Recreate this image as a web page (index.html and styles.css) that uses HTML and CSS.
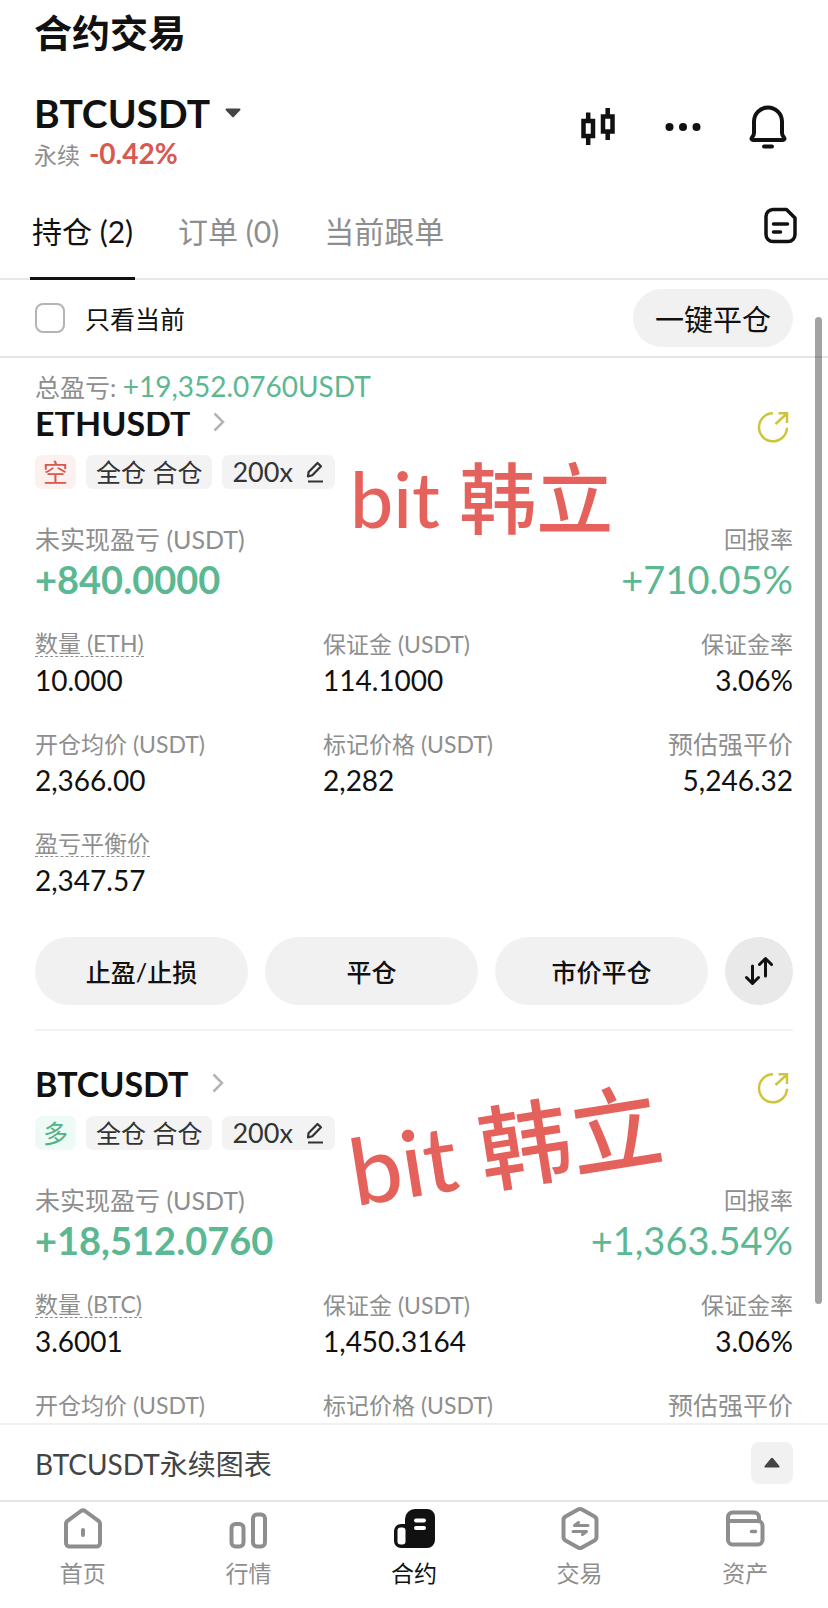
FILE: index.html
```html
<!DOCTYPE html>
<html lang="zh-CN">
<head>
    <meta charset="UTF-8">
    <meta name="viewport" content="width=device-width, initial-scale=1.0">
    <title>合约交易</title>
    <link rel="stylesheet" href="styles.css">
</head>
<body>

    <div class="app">
        <h1 class="page-title">合约交易</h1>

        <header class="pair">
            <div>
                <button type="button" class="pair-name">BTCUSDT
                    <svg width="16" height="10" viewBox="0 0 16 10"><path d="M1.500 0.500h13a1 1 0 0 1 .7 1.700L9 8.800a1.400 1.400 0 0 1-2 0L.8 2.200A1 1 0 0 1 1.500 0.500z" fill="#444"/></svg>
                </button>
                <div class="pair-sub">永续 <span class="down">-0.42%</span></div>
            </div>
            <div class="pair-icons">
                <button type="button" class="icon-btn" aria-label="K线">
                    <svg width="36" height="38" viewBox="0 0 36 38" fill="none" stroke="#111" stroke-width="4.500">
                        <rect x="3.500" y="13" width="9.500" height="15"/>
                        <path d="M8.200 4.500v8M8.200 29v8"/>
                        <rect x="23" y="8.500" width="9.500" height="15"/>
                        <path d="M27.700 0v8M27.700 24v8"/>
                    </svg>
                </button>
                <button type="button" class="icon-btn" aria-label="更多">
                    <svg width="36" height="10" viewBox="0 0 36 10" fill="#111"><circle cx="4.500" cy="5" r="4"/><circle cx="18" cy="5" r="4"/><circle cx="31.500" cy="5" r="4"/></svg>
                </button>
                <button type="button" class="icon-btn" aria-label="提醒">
                    <svg width="40" height="44" viewBox="0 0 40 44" fill="none" stroke="#111" stroke-width="4" stroke-linecap="round" stroke-linejoin="round">
                        <path d="M6 16.500a14 14 0 0 1 28 0V28c0 2 .8 3.200 2 4.500.9 1.100.5 2.500-1 2.500H5c-1.500 0-1.900-1.400-1-2.500C5.200 31.200 6 30 6 28z"/>
                        <path d="M16 41.500h8"/>
                    </svg>
                </button>
            </div>
        </header>

        <nav class="tabs">
            <a href="#" class="tab active">持仓 (2)</a>
            <a href="#" class="tab">订单 (0)</a>
            <a href="#" class="tab">当前跟单</a>
            <button type="button" class="icon-btn tabs-doc" aria-label="历史记录">
                <svg width="34" height="37" viewBox="0 0 34 37" fill="none" stroke="#111" stroke-width="3.500" stroke-linecap="round" stroke-linejoin="round">
                    <path d="M9 2.500h13.500L31 11v16.500a7 7 0 0 1-7 7H9a7 7 0 0 1-7-7v-18a7 7 0 0 1 7-7z"/>
                    <path d="M9.500 17h14M9.500 25h7"/>
                </svg>
            </button>
        </nav>

        <div class="filter">
            <input type="checkbox" id="onlyCurrent" class="check">
            <label for="onlyCurrent">只看当前</label>
            <button type="button" class="close-all">一键平仓</button>
        </div>

        <div class="summary">总盈亏: <span class="summary-num">+19,352.0760USDT</span></div>

        <main class="list">
            <section class="card">
                <div class="card-head">
                    <h2>ETHUSDT</h2>
                    <svg class="chevron" width="12" height="20" viewBox="0 0 12 20"><path d="M1.500 1.500L10 10l-8.500 8.500" fill="none" stroke="#b4b4b4" stroke-width="2.500"/></svg>
                    <button type="button" class="share" aria-label="分享">
                        <svg width="32" height="31" viewBox="0 0 32 31" fill="none" stroke="#cfc53c" stroke-width="2.500"><path d="M16 1.300a14 14 0 1 0 14 14.500M18.500 12L30 1.500M21.500 1.300H30V11"/></svg>
                    </button>
                </div>
                <div class="tags">
                    <span class="tag tag-side tag-short">空</span>
                    <span class="tag">全仓 合仓</span>
                    <button type="button" class="tag tag-edit">200x
                        <svg width="20" height="22" viewBox="0 0 20 22" fill="none" stroke="#333" stroke-width="2.200" stroke-linejoin="round"><path d="M3 15.500l.6-4.500L12.500 2l3.500 3.300-8.700 9zM3 20.500h15"/></svg>
                    </button>
                </div>
                <div class="pnl">
                    <div>
                        <div class="pnl-label">未实现盈亏 (USDT)</div>
                        <div class="pnl-value strong">+840.0000</div>
                    </div>
                    <div class="right">
                        <div class="pnl-label small">回报率</div>
                        <div class="pnl-value">+710.05%</div>
                    </div>
                </div>
                <dl class="stats">
                    <div><dt><span class="hint">数量 (ETH)</span></dt><dd>10.000</dd></div>
                    <div><dt>保证金 (USDT)</dt><dd>114.1000</dd></div>
                    <div class="right"><dt>保证金率</dt><dd>3.06%</dd></div>
                    <div><dt>开仓均价 (USDT)</dt><dd>2,366.00</dd></div>
                    <div><dt>标记价格 (USDT)</dt><dd>2,282</dd></div>
                    <div class="right"><dt class="large">预估强平价</dt><dd>5,246.32</dd></div>
                    <div><dt><span class="hint">盈亏平衡价</span></dt><dd>2,347.57</dd></div>
                </dl>
                <div class="actions">
                    <button type="button">止盈/止损</button>
                    <button type="button">平仓</button>
                    <button type="button">市价平仓</button>
                    <button type="button" class="swap" aria-label="反手">
                        <svg width="30" height="30" viewBox="0 0 30 30" fill="none" stroke="#111" stroke-width="3" stroke-linecap="round" stroke-linejoin="round"><path d="M8.500 10v17M2.500 21.500l6 6 6-6M21.500 20V2.500M15.500 8.500l6-6 6 6"/></svg>
                    </button>
                </div>
                <div class="mark">bit 韩立</div>
            </section>

            <section class="card">
                <div class="card-head">
                    <h2>BTCUSDT</h2>
                    <svg class="chevron" width="12" height="20" viewBox="0 0 12 20"><path d="M1.500 1.500L10 10l-8.500 8.500" fill="none" stroke="#b4b4b4" stroke-width="2.500"/></svg>
                    <button type="button" class="share" aria-label="分享">
                        <svg width="32" height="31" viewBox="0 0 32 31" fill="none" stroke="#cfc53c" stroke-width="2.500"><path d="M16 1.300a14 14 0 1 0 14 14.500M18.500 12L30 1.500M21.500 1.300H30V11"/></svg>
                    </button>
                </div>
                <div class="tags">
                    <span class="tag tag-side tag-long">多</span>
                    <span class="tag">全仓 合仓</span>
                    <button type="button" class="tag tag-edit">200x
                        <svg width="20" height="22" viewBox="0 0 20 22" fill="none" stroke="#333" stroke-width="2.200" stroke-linejoin="round"><path d="M3 15.500l.6-4.500L12.500 2l3.500 3.300-8.700 9zM3 20.500h15"/></svg>
                    </button>
                </div>
                <div class="pnl">
                    <div>
                        <div class="pnl-label">未实现盈亏 (USDT)</div>
                        <div class="pnl-value strong">+18,512.0760</div>
                    </div>
                    <div class="right">
                        <div class="pnl-label small">回报率</div>
                        <div class="pnl-value">+1,363.54%</div>
                    </div>
                </div>
                <dl class="stats">
                    <div><dt><span class="hint">数量 (BTC)</span></dt><dd>3.6001</dd></div>
                    <div><dt>保证金 (USDT)</dt><dd>1,450.3164</dd></div>
                    <div class="right"><dt>保证金率</dt><dd>3.06%</dd></div>
                    <div><dt>开仓均价 (USDT)</dt></div>
                    <div><dt>标记价格 (USDT)</dt></div>
                    <div class="right"><dt class="large">预估强平价</dt></div>
                </dl>
                <div class="mark mark-tilt">bit 韩立</div>
            </section>
        </main>

        <div class="chart-bar">
            <span>BTCUSDT永续图表</span>
            <button type="button" class="expand" aria-label="展开图表">
                <svg width="16" height="11" viewBox="0 0 16 11"><path d="M1.500 10.500h13a1 1 0 0 0 .7-1.700L9 1.200a1.400 1.400 0 0 0-2 0L.8 8.800a1 1 0 0 0 .7 1.700z" fill="#444"/></svg>
            </button>
        </div>

        <nav class="bottom-nav">
            <a href="#">
                <svg width="44" height="44" viewBox="0 0 44 44" fill="none" stroke="#8e8e8e" stroke-width="4" stroke-linejoin="round" stroke-linecap="round"><path d="M5 16.500a3 3 0 0 1 1.200-2.300L20 4a3.500 3.500 0 0 1 4 0l13.800 10.200a3 3 0 0 1 1.200 2.300V36a3.500 3.500 0 0 1-3.500 3.500h-27A3.500 3.500 0 0 1 5 36zM22 23v5"/></svg>
                首页
            </a>
            <a href="#">
                <svg width="44" height="44" viewBox="0 0 44 44" fill="none" stroke="#8e8e8e" stroke-width="4"><rect x="5.500" y="17" width="12" height="22.500" rx="4"/><rect x="27" y="7.500" width="12" height="32" rx="4"/></svg>
                行情
            </a>
            <a href="#" class="active">
                <svg width="44" height="44" viewBox="0 0 44 44"><path d="M13 12a10 10 0 0 1 10-10h12a8 8 0 0 1 8 8v23a8 8 0 0 1-8 8H9a7 7 0 0 1-7-7V24a7 7 0 0 1 7-7h4z" fill="#111"/><rect x="5.500" y="20.500" width="8" height="17" rx="3" fill="#fff"/><path d="M24 13.500h8M24 21h8" stroke="#fff" stroke-width="4" stroke-linecap="round"/></svg>
                合约
            </a>
            <a href="#">
                <svg width="44" height="44" viewBox="0 0 44 44" fill="none" stroke="#8e8e8e" stroke-width="4" stroke-linejoin="round"><path d="M20 2.600a4 4 0 0 1 4 0l12.500 6.900a4 4 0 0 1 2 3.500v17a4 4 0 0 1-2 3.500L24 40.400a4 4 0 0 1-4 0L7.500 33.500a4 4 0 0 1-2-3.500V13a4 4 0 0 1 2-3.500z"/><path d="M30 18.500H16.500l4-3M15 24.500h13.500l-4 3" stroke-width="3" stroke-linecap="round"/></svg>
                交易
            </a>
            <a href="#">
                <svg width="44" height="44" viewBox="0 0 44 44" fill="none" stroke="#8e8e8e" stroke-width="4" stroke-linejoin="round" stroke-linecap="round"><path d="M5 14v-4a4.500 4.500 0 0 1 4.500-4.500H31a5 5 0 0 1 5 5v3.500M5 14h30a4.500 4.500 0 0 1 4.500 4.500V33a4.500 4.500 0 0 1-4.500 4.500H9.500A4.500 4.500 0 0 1 5 33z"/><path d="M28.500 24.500h4" stroke-width="3.500"/></svg>
                资产
            </a>
        </nav>

        <div class="scrollbar"></div>
    </div>

</body>
</html>
```

FILE: styles.css
```css
* {
    box-sizing: border-box;
}

body {
    margin: 0;
    background-color: #fff;
    color: #111;
    font-family: Lato, "Noto Sans CJK SC", sans-serif;
}

button {
    border: none;
    padding: 0;
    background: none;
    color: inherit;
    font-family: inherit;
    cursor: pointer;
}

a {
    color: inherit;
    text-decoration: none;
}

svg {
    display: block;
    overflow: visible;
}

.app {
    position: relative;
    display: flex;
    flex-direction: column;
    height: 100vh;
}

.page-title {
    margin: 0;
    padding: 0 34px;
    font-size: 38px;
    font-weight: 700;
    line-height: 64px;
}

/* Pair header */
.pair {
    display: flex;
    justify-content: space-between;
    padding: 27px 38px 0 34px;
}

.pair-name {
    display: flex;
    align-items: center;
    gap: 15px;
    font-size: 39px;
    font-weight: 700;
    line-height: 44px;
}

.pair-sub {
    color: #8e8e8e;
    font-size: 23px;
    line-height: 36px;
}

.down {
    margin-left: 3px;
    color: #d9584f;
    font-size: 28px;
    font-weight: 700;
}

.pair-icons {
    display: flex;
    gap: 41px;
    height: 72px;
}

.icon-btn {
    display: flex;
    align-items: center;
    justify-content: center;
    width: 44px;
}

/* Tabs */
.tabs {
    display: flex;
    gap: 41px;
    padding: 38px 30px 0;
    border-bottom: 2px solid #e8e8e8;
}

.tab {
    margin-bottom: -2px;
    padding: 0 2px 26px;
    border-bottom: 3px solid transparent;
    color: #8e8e8e;
    font-size: 30px;
    line-height: 40px;
}

.tab.active {
    border-bottom-color: #111;
    color: #111;
}

.tabs-doc {
    width: 34px;
    height: 28px;
    margin-left: auto;
}

/* Filter row */
.filter {
    display: flex;
    align-items: center;
    gap: 20px;
    height: 78px;
    padding: 0 35px;
    border-bottom: 2px solid #e5e5e5;
    font-size: 25px;
}

.check {
    appearance: none;
    width: 30px;
    height: 30px;
    margin: 0;
    border: 2px solid #b4b4b4;
    border-radius: 8px;
}

.check:checked {
    background-color: #111;
}

.close-all {
    height: 58px;
    margin-left: auto;
    padding: 0 22px;
    border-radius: 29px;
    background-color: #f1f1f1;
    font-size: 29px;
}

.summary {
    padding: 8px 35px 5px;
    color: #8e8e8e;
    font-size: 25px;
    line-height: 40px;
}

.summary-num {
    color: #5bb892;
    font-size: 28px;
}

/* Position list */
.list {
    flex: 1;
    min-height: 0;
    overflow: hidden;
    padding: 0 35px;
}

.card {
    position: relative;
}

.card + .card {
    margin-top: 24px;
    padding-top: 42px;
    border-top: 2px solid #f3f3f3;
}

.card-head {
    display: flex;
    align-items: flex-start;
    gap: 23px;
}

.card-head h2 {
    margin: 0;
    font-size: 34px;
    font-weight: 700;
    line-height: 22px;
}

.share {
    margin-left: auto;
    padding-right: 4px;
}

.tags {
    display: flex;
    gap: 10px;
    margin-top: 12px;
}

.tag {
    height: 34px;
    padding: 0 10px;
    border-radius: 7px;
    background-color: #f3f3f3;
    color: #333;
    font-size: 25px;
    line-height: 34px;
}

.tag-side {
    padding: 0 8px;
}

.tag-short {
    background-color: #fdf1f0;
    color: #d9584f;
}

.tag-long {
    background-color: #eefaf5;
    color: #4fb38a;
}

.tag-edit {
    display: flex;
    align-items: center;
    gap: 12px;
    font-size: 27px;
}

.pnl {
    display: flex;
    justify-content: space-between;
    margin-top: 34px;
}

.pnl-label {
    color: #8e8e8e;
    font-size: 25px;
    line-height: 32px;
}

.pnl-label.small {
    font-size: 23px;
}

.pnl-value {
    margin-top: 2px;
    color: #5bb892;
    font-size: 38px;
    line-height: 44px;
}

.pnl-value.strong {
    font-weight: 700;
}

.right {
    text-align: right;
}

.stats {
    display: grid;
    grid-template-columns: 38% 38% 24%;
    row-gap: 31px;
    margin: 28px 0 0;
}

.stats dt {
    color: #8e8e8e;
    font-size: 23px;
    line-height: 30px;
}

.stats dt.large {
    font-size: 25px;
}

.stats dd {
    margin: 3px 0 0;
    font-size: 28px;
    line-height: 36px;
}

.hint {
    display: inline-block;
    height: 28px;
    border-bottom: 1px dashed #8e8e8e;
    line-height: 28px;
    vertical-align: top;
}

.actions {
    display: flex;
    gap: 17px;
    margin-top: 39px;
}

.actions button {
    flex: 1;
    height: 68px;
    border-radius: 34px;
    background-color: #f1f1f1;
    font-size: 25px;
    font-weight: 500;
}

.actions .swap {
    display: flex;
    flex: none;
    align-items: center;
    justify-content: center;
    width: 68px;
    background-color: #e9e9e9;
}

/* Name stamped over the card */
.mark {
    position: absolute;
    top: 36px;
    left: 315px;
    color: #e5625c;
    font-size: 77px;
    font-weight: 500;
    line-height: 100px;
    white-space: nowrap;
    pointer-events: none;
}

.mark-tilt {
    top: 66px;
    left: 313px;
    font-size: 92px;
    transform: rotate(-9deg);
}

/* Chart drawer */
.chart-bar {
    display: flex;
    align-items: center;
    justify-content: space-between;
    height: 77px;
    padding: 0 35px;
    border-top: 2px solid #f0f0f0;
    color: #444;
    font-size: 28px;
}

.expand {
    display: flex;
    align-items: center;
    justify-content: center;
    width: 42px;
    height: 42px;
    border-radius: 8px;
    background-color: #f1f1f1;
}

.bottom-nav {
    display: flex;
    height: 108px;
    padding-top: 5px;
    border-top: 2px solid #e5e5e5;
}

.bottom-nav a {
    display: flex;
    flex: 1;
    flex-direction: column;
    align-items: center;
    gap: 6px;
    color: #8e8e8e;
    font-size: 23px;
    line-height: 32px;
}

.bottom-nav a.active {
    color: #111;
}

.scrollbar {
    position: absolute;
    top: 317px;
    right: 6px;
    bottom: 304px;
    width: 7px;
    border-radius: 4px;
    background-color: rgba(0, 0, 0, 0.36);
}
```
